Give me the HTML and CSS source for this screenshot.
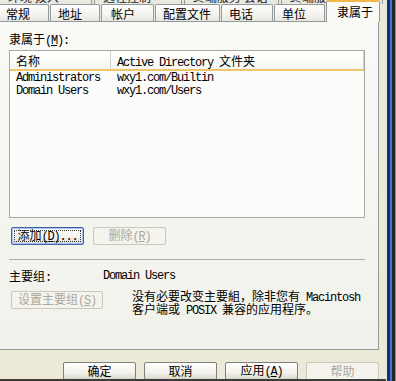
FILE: index.html
```html
<!DOCTYPE html>
<html>
<head>
<meta charset="utf-8">
<link rel="stylesheet" href="styles.css">
</head>
<body>
<div class="screen">
  <div class="dialog">
    <div class="tabs">
      <div class="row back">
        <div class="btab b1"><span>环境 拨入</span></div>
        <div class="btab b2"><span>远程控制</span></div>
        <div class="btab b3"><span>终端服务 会话</span></div>
        <div class="btab b4"><span>终端服务 配置</span></div>
      </div>
      <div class="row front">
        <div class="tab t1">常规</div>
        <div class="tab t2">地址</div>
        <div class="tab t3">帐户</div>
        <div class="tab t4">配置文件</div>
        <div class="tab t5">电话</div>
        <div class="tab t6">单位</div>
        <div class="tab sel">隶属于</div>
      </div>
    </div>
    <div class="panel">
      <div class="label">隶属于<span class="a">(<u>M</u>):</span></div>
      <div class="list">
        <div class="lhead">
          <div class="c1">名称</div>
          <div class="c2"><span class="a">Active Directory </span>文件夹</div>
        </div>
        <div class="lrow">
          <div class="c1 a">Administrators</div>
          <div class="c2 a">wxy1.com/Builtin</div>
        </div>
        <div class="lrow">
          <div class="c1 a">Domain Users</div>
          <div class="c2 a">wxy1.com/Users</div>
        </div>
      </div>
      <div class="btnrow">
        <button class="btn focus">添加<span class="a">(<u>D</u>)...</span></button>
        <button class="btn dis">删除<span class="a">(<u>R</u>)</span></button>
      </div>
      <div class="sep"></div>
      <div class="primary">
        <div class="plabel">主要组<span class="a">:</span></div>
        <div class="a">Domain Users</div>
      </div>
      <div class="setrow">
        <button class="btn dis wide">设置主要组<span class="a">(<u>S</u>)</span></button>
        <div class="note">
          <div class="nline">没有必要改变主要組，除非您有<span class="a"> Macintosh</span></div>
          <div class="nline">客户端或<span class="a"> POSIX </span>兼容的应用程序。</div>
        </div>
      </div>
    </div>
    <div class="footer">
      <button class="btn">确定</button>
      <button class="btn">取消</button>
      <button class="btn">应用<span class="a">(<u>A</u>)</span></button>
      <button class="btn dis">帮助</button>
    </div>
  </div>
  <div class="frame"></div>
</div>
</body>
</html>
```

FILE: styles.css
```css
html, body {
  margin: 0;
  padding: 0;
}
body {
  font-family: "Noto Sans CJK SC", "Liberation Sans", sans-serif;
  font-size: 12px;
  color: #000;
  background: #ECE9D8;
}
.screen {
  width: 396px;
  height: 381px;
  display: flex;
  overflow: hidden;
}
.dialog {
  width: 386px;
  height: 381px;
  box-sizing: border-box;
  background: #ECE9D8;
  border-bottom: 2px solid #3c3c3c;
  display: flex;
  flex-direction: column;
}
.frame {
  width: 10px;
  height: 381px;
  background: linear-gradient(to right, #ECE9D8 0 1px, #12307a 1px 4px, #4a74c9 4px 6px, #23262e 6px 9px, #8a8a8a 9px 10px);
}
.a {
  font-family: "Liberation Mono", monospace;
  font-size: 12px;
  letter-spacing: -1.2px;
}
u { text-decoration: underline; }

/* tabs */
.tabs {
  display: flex;
  flex-direction: column;
  margin-left: -1px;
}
.row {
  display: flex;
}
.back {
  height: 4px;
  overflow: hidden;
}
.btab {
  height: 4px;
  box-sizing: border-box;
  border-left: 1px solid #919B9C;
  border-right: 1px solid #919B9C;
  background: #E9E8E1;
  margin-right: 2px;
  overflow: hidden;
  padding-left: 8px;
  line-height: 12px;
  color: #222;
}
.btab span {
  display: block;
  margin-top: -9px;
  white-space: nowrap;
}
.b1 { width: 93px; }
.b2 { width: 88px; }
.b3 { width: 95px; }
.b4 { width: 102px; }
.front {
  height: 17px;
  align-items: flex-end;
}
.tab {
  height: 17px;
  box-sizing: border-box;
  border: 1px solid #919B9C;
  border-bottom: none;
  border-radius: 2px 2px 0 0;
  background: linear-gradient(#FEFEFE, #F4F3EF 60%, #E6E5DE);
  padding: 2px 0 0 7px;
  line-height: 14px;
  margin-right: 1px;
  white-space: nowrap;
}
.t1 { width: 50px; padding-left: 6px; }
.t2 { width: 50px; }
.t3 { width: 53px; padding-left: 9px; }
.t4 { width: 65px; }
.t5 { width: 52px; }
.t6 { width: 51px; }
.tab.sel {
  width: 54px;
  height: 22px;
  margin-bottom: -1px;
  margin-right: 0;
  position: relative;
  z-index: 1;
  background: #FAFAF7;
  border-top: 2px solid #F2B84A;
  padding: 3px 0 0 10px;
}

/* panel */
.panel {
  width: 380px;
  height: 329px;
  box-sizing: border-box;
  margin-left: -1px;
  border: 1px solid #919B9C;
  border-left: none;
  background: linear-gradient(#F9F9F6, #F2F2EC);
  padding: 10px 0 0 10px;
  display: flex;
  flex-direction: column;
}
.label {
  line-height: 14px;
  height: 14px;
}
.list {
  margin-top: 4px;
  width: 356px;
  height: 168px;
  box-sizing: border-box;
  border: 1px solid #A8A8A0;
  background: #FBFCF9;
}
.lhead {
  display: flex;
  height: 20px;
  box-sizing: border-box;
  border-bottom: 2px solid #F0C46C;
  background: linear-gradient(#FFFFFF, #F7F7F2);
}
.lhead .c1 {
  width: 101px;
  box-sizing: border-box;
  border-right: 1px solid #D4D2C8;
  padding: 3px 0 0 6px;
  line-height: 14px;
}
.lhead .c2 {
  flex: 1;
  box-sizing: border-box;
  padding: 3px 0 0 6px;
  line-height: 14px;
  border-right: 1px solid #D4D2C8;
}
.lrow {
  display: flex;
  height: 13px;
  line-height: 13px;
}
.lhead + .lrow { margin-top: 1px; }
.lrow .c1 {
  width: 101px;
  box-sizing: border-box;
  padding-left: 6px;
}
.lrow .c2 {
  padding-left: 6px;
}

/* buttons */
.btn {
  font-family: "Noto Sans CJK SC", "Liberation Sans", sans-serif;
  font-size: 12px;
  color: #000;
  height: 18px;
  width: 73px;
  box-sizing: border-box;
  padding: 0;
  line-height: 14px;
  border: 1px solid #7F8077;
  border-radius: 2px;
  background: linear-gradient(#FFFFFF, #F3F2EC 60%, #DAD8CD);
  white-space: nowrap;
}
.btn.focus {
  border-color: #3E62A8;
  box-shadow: inset 0 0 0 1px #A8C1EC;
  outline: 1px dotted #333;
  outline-offset: -4px;
}
.btn.dis {
  color: #ACA899;
  border-color: #CBC8BA;
  background: #F4F3EE;
}
.btnrow {
  display: flex;
  gap: 9px;
  margin-top: 9px;
  padding-left: 2px;
}
.sep {
  margin-top: 14px;
  width: 356px;
  height: 1px;
  background: #ADADA5;
}
.primary {
  display: flex;
  margin-top: 9px;
  line-height: 14px;
  height: 14px;
}
.plabel {
  width: 94px;
}
.setrow {
  display: flex;
  margin-top: 8px;
  padding-left: 2px;
}
.btn.wide {
  width: 92px;
}
.note {
  margin-left: 29px;
  margin-top: -2px;
  white-space: nowrap;
  display: flex;
  flex-direction: column;
}
.nline {
  height: 13px;
  line-height: 13px;
}
.nline .a {
  line-height: 13px;
}

/* footer */
.footer {
  flex: 1;
  overflow: hidden;
  display: flex;
  gap: 8px;
  padding: 12px 0 0 63px;
}
.footer .btn {
  flex: none;
}
```
